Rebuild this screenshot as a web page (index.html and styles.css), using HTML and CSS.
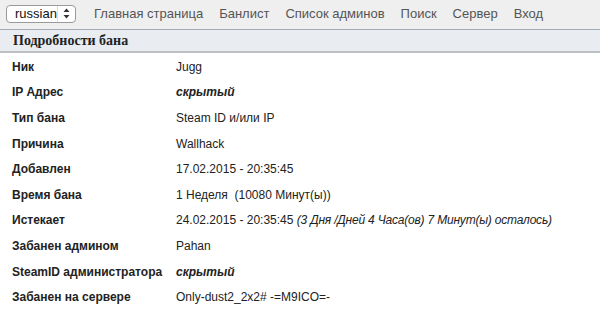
FILE: index.html
```html
<!DOCTYPE html>
<html lang="ru">
<head>
    <meta charset="UTF-8">
    <title>Подробности бана</title>
    <link rel="stylesheet" href="styles.css">
</head>
<body>

    <!-- верхнее меню -->
    <div class="topbar">
        <div class="lang-select">
            <span>russian</span>
            <span class="arrows">
                <svg width="7" height="11" viewBox="0 0 7 11"><path d="M3.5 0.5 L6.5 4 L0.5 4 Z" fill="#333"/><path d="M3.5 10.5 L6.5 7 L0.5 7 Z" fill="#333"/></svg>
            </span>
        </div>
        <nav class="menu">
            <a href="#">Главная страница</a>
            <a href="#">Банлист</a>
            <a href="#">Список админов</a>
            <a href="#">Поиск</a>
            <a href="#">Сервер</a>
            <a href="#">Вход</a>
        </nav>
    </div>

    <div class="panel-title">Подробности бана</div>

    <table class="details">
        <tr><th>Ник</th><td>Jugg</td></tr>
        <tr><th>IP Адрес</th><td><i class="hidden">скрытый</i></td></tr>
        <tr><th>Тип бана</th><td>Steam ID и/или IP</td></tr>
        <tr><th>Причина</th><td>Wallhack</td></tr>
        <tr><th>Добавлен</th><td>17.02.2015 - 20:35:45</td></tr>
        <tr><th>Время бана</th><td>1 Неделя&nbsp; (10080 Минут(ы))</td></tr>
        <tr><th>Истекает</th><td>24.02.2015 - 20:35:45 <i class="left">(3 Дня /Дней 4 Часа(ов) 7 Минут(ы) осталось)</i></td></tr>
        <tr><th>Забанен админом</th><td>Pahan</td></tr>
        <tr><th>SteamID администратора</th><td><i class="hidden">скрытый</i></td></tr>
        <tr><th>Забанен на сервере</th><td>Only-dust2_2x2# -=M9ICO=-</td></tr>
    </table>

</body>
</html>
```

FILE: styles.css
```css
body {
    margin: 0;
    padding: 0;
    font-family: "Liberation Sans", Arial, sans-serif;
    font-size: 12px;
    color: #222;
    background-color: #fff;
}

.topbar {
    height: 29px;
    background-color: #efefef;
    border-bottom: 1px solid #a3abb3;
    display: flex;
    align-items: center;
    padding-left: 6px;
}

.lang-select {
    width: 70px;
    height: 18px;
    box-sizing: border-box;
    border: 1px solid #9a9a9a;
    border-radius: 4px;
    background-color: #fff;
    display: flex;
    align-items: center;
    justify-content: space-between;
    font-size: 13px;
    color: #111;
    padding-left: 8px;
    margin-top: -2px;
}

.lang-select .arrows {
    width: 17px;
    height: 100%;
    border-left: 1px solid #ddd;
    display: flex;
    align-items: center;
    justify-content: center;
}

.menu {
    display: flex;
    gap: 16px;
    margin-left: 18px;
    margin-top: -2px;
}

.menu a {
    color: #555;
    text-decoration: none;
    font-size: 13px;
}

.menu a:hover {
    text-decoration: underline;
}

.panel-title {
    height: 21px;
    line-height: 21px;
    background-color: #e9edf2;
    border-bottom: 2px solid #bcc0c4;
    padding-left: 13px;
    font-family: "Liberation Serif", "DejaVu Serif", serif;
    font-weight: bold;
    font-size: 14px;
    color: #222;
}

.details {
    border-collapse: collapse;
    margin-top: 1px;
}

.details th,
.details td {
    height: 25.6px;
    padding: 0;
    text-align: left;
    vertical-align: middle;
}

.details th {
    width: 164px;
    padding-left: 12px;
    font-weight: bold;
    color: #222;
}

.details td {
    color: #222;
}

.details .hidden {
    font-weight: bold;
}

.details .left {
    letter-spacing: -0.2px;
}
```
